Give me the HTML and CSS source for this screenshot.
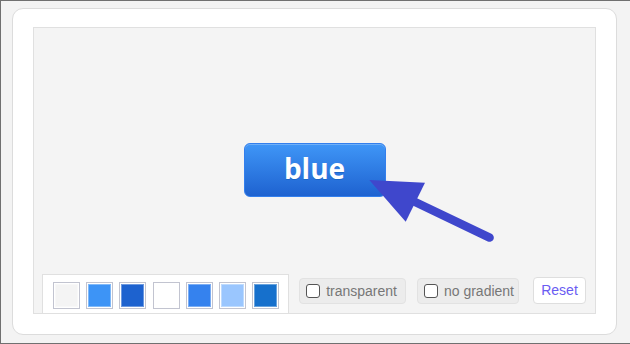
FILE: index.html
```html
<!DOCTYPE html>
<html>
<head>
<meta charset="utf-8">
<link rel="stylesheet" href="styles.css">
</head>
<body>
<div class="card">
  <div class="stage">
    <div class="center">
      <button class="blue-btn">blue</button>
    </div>
    <svg class="arrow" width="561" height="285" viewBox="0 0 561 285">
      <line x1="378" y1="172.5" x2="455.6" y2="209.6" stroke="#3f47cc" stroke-width="8.5" stroke-linecap="round"/>
      <polygon points="335.3,152 391,154.7 371.7,193.7" fill="#3f47cc"/>
    </svg>
    <div class="controls">
      <div class="palette">
        <span class="sw" style="background:#f4f4f4"></span>
        <span class="sw" style="background:#3d94f6"></span>
        <span class="sw" style="background:#1d62cf"></span>
        <span class="sw" style="background:#ffffff"></span>
        <span class="sw" style="background:#3582ee"></span>
        <span class="sw" style="background:#9ac6fe"></span>
        <span class="sw" style="background:#1670cc"></span>
      </div>
      <label class="opt opt-a"><input type="checkbox" class="cb">transparent</label>
      <label class="opt opt-b"><input type="checkbox" class="cb">no gradient</label>
      <button class="reset">Reset</button>
    </div>
  </div>
</div>
</body>
</html>
```
FILE: styles.css
```css
html, body {
  margin: 0;
  padding: 0;
}
body {
  width: 630px;
  height: 344px;
  box-sizing: border-box;
  background: #f3f3f3;
  border-top: 1px solid #707070;
  border-left: 1px solid #707070;
  border-bottom: 1px solid #707070;
  font-family: "Liberation Sans", Arial, sans-serif;
  overflow: hidden;
}
.card {
  margin: 7px 0 0 11px;
  width: 605px;
  height: 327px;
  box-sizing: border-box;
  background: #fff;
  border: 1px solid #dcdcdc;
  border-radius: 11px;
  padding: 18px 0 0 20px;
}
.stage {
  position: relative;
  width: 563px;
  height: 287px;
  box-sizing: border-box;
  background: #f4f4f4;
  border: 1px solid #e0e0e0;
  display: grid;
  grid-template: 1fr / 1fr;
}
.center {
  grid-area: 1 / 1;
  display: flex;
  align-items: center;
  justify-content: center;
  padding-bottom: 2px;
}
.blue-btn {
  width: 142px;
  height: 54px;
  box-sizing: border-box;
  border: 1px solid #337fed;
  border-radius: 6px;
  background: linear-gradient(#3f96f7, #1e62d0);
  color: #fff;
  font-family: "Open Sans", sans-serif;
  font-weight: 700;
  font-size: 28px;
  line-height: 1;
  padding: 0 0 3px 0;
  text-shadow: 0 1px 0 #1a66c8;
  box-shadow: inset 0 1px 0 rgba(255,255,255,0.25);
}
.arrow {
  position: absolute;
  left: 0;
  top: 0;
}
.controls {
  grid-area: 1 / 1;
  align-self: end;
  display: flex;
  align-items: flex-start;
  padding-left: 8px;
  position: relative;
}
.palette {
  display: flex;
  gap: 6.2px;
  background: #fff;
  border: 1px solid #e0e0e0;
  border-bottom: none;
  padding: 7px 9px 4px 10px;
  height: 27px;
}
.sw {
  display: block;
  width: 27px;
  height: 27px;
  box-sizing: border-box;
  border: 1px solid #c2c4d0;
  box-shadow: inset 0 0 0 1px #ffffff, inset 0 0 0 2px rgba(255,255,255,0.35);
}
.opt {
  display: flex;
  align-items: center;
  white-space: nowrap;
  height: 26px;
  box-sizing: border-box;
  margin-top: 4px;
  background: #ececec;
  border: 1px solid #e2e2e2;
  border-radius: 4px;
  padding: 0 8px 0 6px;
  color: #777;
  font-size: 14px;
}
.opt-a {
  margin-left: 10px;
}
.opt-b {
  margin-left: 11px;
  padding-right: 4px;
}
.cb {
  appearance: none;
  -webkit-appearance: none;
  margin: 0 6px 0 0;
  width: 14px;
  height: 14px;
  box-sizing: border-box;
  border: 1.5px solid #555;
  border-radius: 3px;
  background: #fff;
  flex: none;
}
.reset {
  margin-top: 3px;
  margin-left: 14px;
  width: 53px;
  height: 27px;
  box-sizing: border-box;
  background: #fff;
  border: 1px solid #dedede;
  border-radius: 4px;
  color: #6a5cf2;
  font-family: "Liberation Sans", Arial, sans-serif;
  font-size: 14px;
  padding: 0 0 2px 0;
}
```
